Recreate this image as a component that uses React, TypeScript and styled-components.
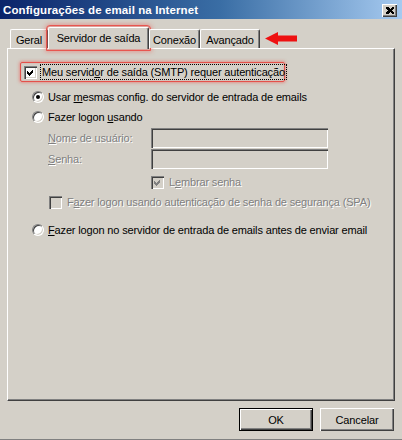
import React from "react";
import styled, { createGlobalStyle, css } from "styled-components";

const Global = createGlobalStyle`
  html, body { margin: 0; padding: 0; background: #d4d0c8; }
  body { font-family: "Liberation Sans", Arial, sans-serif; font-size: 11px; letter-spacing: -0.15px; color: #000; }
  * { box-sizing: border-box; }
`;

const Window = styled.div`
  width: 402px;
  height: 440px;
  background: #d4d0c8;
  display: flex;
  flex-direction: column;
  border-bottom: 1px solid #808080;
  overflow: hidden;
`;

const TitleBar = styled.div`
  height: 19px;
  flex: none;
  background: linear-gradient(to right, #0a246a 0%, #3a6ea5 55%, #a6caf0 100%);
  display: flex;
  align-items: center;
  justify-content: space-between;
  padding: 0 5px 0 3px;
`;

const Title = styled.span`
  color: #fff;
  font-weight: bold;
  font-size: 11.5px;
  letter-spacing: 0.1px;
  white-space: nowrap;
`;

const CloseButton = styled.div`
  width: 15px;
  height: 13px;
  background: #d4d0c8;
  box-shadow: inset 1px 1px 0 #ffffff, inset -1px -1px 0 #404040, inset -2px -2px 0 #808080;
  display: flex;
  align-items: center;
  justify-content: center;
  margin-top: 1px;
`;

const Body = styled.div`
  flex: 1;
  display: flex;
  flex-direction: column;
  padding: 8px 7px 0 7px;
`;

const TabStrip = styled.div`
  height: 21px;
  display: flex;
  align-items: flex-end;
  padding-left: 3px;
  position: relative;
  z-index: 2;
`;

const Tab = styled.div<{ $w: number; $active?: boolean }>`
  width: ${(p) => p.$w}px;
  height: 19px;
  background: #d4d0c8;
  border-top: 1px solid #ffffff;
  border-left: 1px solid #ffffff;
  border-right: 1px solid #404040;
  box-shadow: inset -1px 0 0 #808080;
  border-radius: 2px 2px 0 0;
  display: flex;
  align-items: center;
  justify-content: center;
  padding-top: 1px;
  white-space: nowrap;
  ${(p) =>
    p.$active &&
    css`
      height: 22px;
      margin-bottom: -1px;
      padding-bottom: 3px;
      outline: 1px solid #e8554f;
      outline-offset: 1px;
      box-shadow: inset -1px 0 0 #808080, 0 0 4px 3px rgba(236, 90, 84, 0.45);
    `}
`;

const Arrow = styled.svg`
  margin-left: 5px;
  margin-bottom: 3px;
  flex: none;
`;

const Panel = styled.div`
  height: 353px;
  border-top: 1px solid #ffffff;
  border-left: 1px solid #ffffff;
  border-right: 1px solid #404040;
  border-bottom: 1px solid #404040;
  box-shadow: inset -1px -1px 0 #808080;
  display: flex;
  flex-direction: column;
  padding-top: 13px;
  position: relative;
  z-index: 1;
`;

const Highlight = styled.div`
  margin-left: 12px;
  width: 265px;
  height: 20px;
  border: 1px solid #e4504a;
  border-radius: 2px;
  box-shadow: 0 0 3px 1px rgba(236, 90, 84, 0.5), inset 0 0 2px rgba(236, 90, 84, 0.4);
  display: flex;
  align-items: center;
  padding-left: 3px;
  gap: 3px;
  white-space: nowrap;
`;

const Row = styled.div<{ $indent: number; $top?: number; $gap?: number }>`
  height: 20px;
  margin-left: ${(p) => p.$indent}px;
  margin-top: ${(p) => p.$top ?? 0}px;
  display: flex;
  align-items: center;
  gap: ${(p) => p.$gap ?? 4}px;
  white-space: nowrap;
`;

const Label = styled.span<{ $disabled?: boolean; $w?: number }>`
  ${(p) => p.$w && css`width: ${p.$w}px;`}
  ${(p) =>
    p.$disabled &&
    css`
      color: #808080;
      text-shadow: 1px 1px 0 #ffffff;
    `}
`;

const Focus = styled.span`
  border: 1px dotted #000;
  padding: 0 1px;
  line-height: 14px;
  white-space: nowrap;
`;

const Box = styled.span<{ $disabled?: boolean }>`
  width: 13px;
  height: 13px;
  flex: none;
  background: ${(p) => (p.$disabled ? "#d4d0c8" : "#ffffff")};
  box-shadow: inset 1px 1px 0 #808080, inset 2px 2px 0 #404040, inset -1px -1px 0 #ffffff,
    inset -2px -2px 0 #d4d0c8;
  display: flex;
`;

const RadioOuter = styled.span`
  width: 12px;
  height: 12px;
  flex: none;
  border-radius: 50%;
  background: #ffffff;
  border: 1px solid;
  border-color: #808080 #ffffff #ffffff #808080;
  box-shadow: inset 1px 1px 0 #404040, inset -1px -1px 0 #d4d0c8;
  display: flex;
  align-items: center;
  justify-content: center;
`;

const RadioDot = styled.span`
  width: 4px;
  height: 4px;
  border-radius: 50%;
  background: #000;
`;

const Input = styled.div`
  width: 177px;
  height: 20px;
  background: #d4d0c8;
  box-shadow: inset 1px 1px 0 #808080, inset 2px 2px 0 #404040, inset -1px -1px 0 #ffffff,
    inset -2px -2px 0 #d4d0c8;
`;

const ButtonRow = styled.div`
  display: flex;
  justify-content: flex-end;
  gap: 7px;
  margin-top: 7px;
  padding-right: 1px;
`;

const Button = styled.div<{ $default?: boolean }>`
  width: 74px;
  height: 23px;
  display: flex;
  align-items: center;
  justify-content: center;
  background: #d4d0c8;
  box-shadow: inset 1px 1px 0 #ffffff, inset -1px -1px 0 #404040, inset -2px -2px 0 #808080;
  ${(p) =>
    p.$default &&
    css`
      border: 1px solid #000;
    `}
`;

const Check = ({ color = "#000" }: { color?: string }) => (
  <svg width="13" height="13" viewBox="0 0 13 13" shapeRendering="crispEdges">
    <path d="M3 5 L5 7 L9 3 L9 6 L5 10 L3 8 Z" fill={color} />
  </svg>
);

const Checkbox = ({ checked, disabled }: { checked?: boolean; disabled?: boolean }) => (
  <Box $disabled={disabled}>{checked && <Check color={disabled ? "#808080" : "#000"} />}</Box>
);

const Radio = ({ checked }: { checked?: boolean }) => (
  <RadioOuter>{checked && <RadioDot />}</RadioOuter>
);

export default function App() {
  return (
    <>
      <Global />
      <Window>
        <TitleBar>
          <Title>Configurações de email na Internet</Title>
          <CloseButton>
            <svg width="8" height="7" viewBox="0 0 8 7" shapeRendering="crispEdges">
              <path d="M0 0h2l2 2 2-2h2v1l-2 2.5 2 2.5v1h-2l-2-2-2 2h-2v-1l2-2.5-2-2.5z" fill="#000" />
            </svg>
          </CloseButton>
        </TitleBar>
        <Body>
          <TabStrip>
            <Tab $w={38}>Geral</Tab>
            <Tab $w={101} $active>
              Servidor de saída
            </Tab>
            <Tab $w={51}>Conexão</Tab>
            <Tab $w={60}>Avançado</Tab>
            <Arrow width="33" height="13" viewBox="0 0 33 13">
              <path d="M0 6.5 L13 0 L13 3.5 L32 3.5 L32 9.5 L13 9.5 L13 13 Z" fill="#ee1111" />
            </Arrow>
          </TabStrip>
          <Panel>
            <Highlight>
              <Checkbox checked />
              <Focus>
                Meu servid<u>o</u>r de saída (SMTP) requer autenticação
              </Focus>
            </Highlight>
            <Row $indent={24} $top={5}>
              <Radio checked />
              <Label>
                Usar <u>m</u>esmas config. do servidor de entrada de emails
              </Label>
            </Row>
            <Row $indent={24}>
              <Radio />
              <Label>
                Fazer logon <u>u</u>sando
              </Label>
            </Row>
            <Row $indent={40} $top={1} $gap={0}>
              <Label $disabled $w={103}>
                <u>N</u>ome de usuário:
              </Label>
              <Input />
            </Row>
            <Row $indent={40} $top={1} $gap={0}>
              <Label $disabled $w={103}>
                <u>S</u>enha:
              </Label>
              <Input />
            </Row>
            <Row $indent={143} $top={3} $gap={5}>
              <Checkbox checked disabled />
              <Label $disabled>
                L<u>e</u>mbrar senha
              </Label>
            </Row>
            <Row $indent={41} $gap={5}>
              <Checkbox disabled />
              <Label $disabled>
                F<u>a</u>zer logon usando autenticação de senha de segurança (SPA)
              </Label>
            </Row>
            <Row $indent={24} $top={8}>
              <Radio />
              <Label>
                <u>F</u>azer logon no servidor de entrada de emails antes de enviar email
              </Label>
            </Row>
          </Panel>
          <ButtonRow>
            <Button $default>OK</Button>
            <Button>Cancelar</Button>
          </ButtonRow>
        </Body>
      </Window>
    </>
  );
}
